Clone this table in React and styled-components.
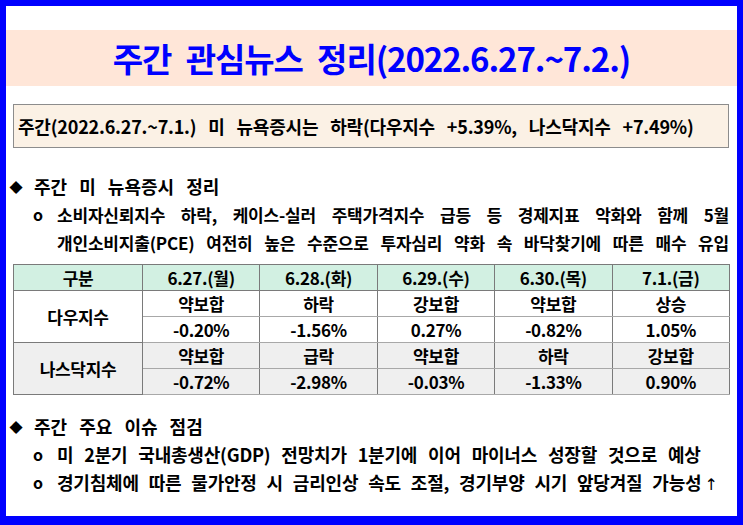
import React from "react";
import styled, { createGlobalStyle } from "styled-components";

const Global = createGlobalStyle`
  html, body { margin: 0; padding: 0; background: #0000ff; }
  body { font-family: "Noto Sans CJK KR", "Noto Sans", sans-serif; }
`;

const Frame = styled.div`
  width: 743px;
  height: 525px;
  box-sizing: border-box;
  background: #0000ff;
  padding: 6px 6px 9px 6px;
`;

const Sheet = styled.div`
  height: 100%;
  background: #ffffff;
  padding-top: 24px;
  box-sizing: border-box;
  color: #000;
`;

const TitleBand = styled.div`
  height: 56px;
  background: #ffe6d8;
  display: flex;
  align-items: center;
  justify-content: center;
`;

const Title = styled.h1`
  margin: 0;
  font-size: 33px;
  font-weight: 700;
  color: #0000ff;
  letter-spacing: -1.1px;
  word-spacing: 8px;
`;

const Summary = styled.div`
  margin: 18px 8px 0 7px;
  height: 44px;
  box-sizing: border-box;
  border: 1px solid #8c8c8c;
  background: #fbf1e5;
  display: flex;
  align-items: center;
  padding-left: 4px;
  font-size: 18px;
  font-weight: 700;
  letter-spacing: -0.2px;
  word-spacing: 8px;
`;

const Heading = styled.div`
  margin: ${(p) => p.$top}px 0 0 0;
  height: 28px;
  display: flex;
  align-items: center;
  font-size: 18px;
  font-weight: 700;
  word-spacing: 8px;
`;

const Diamond = styled.span`
  width: 20px;
  margin-right: 8px;
  font-size: 17px;
  text-align: center;
  font-family: "DejaVu Sans", sans-serif;
`;

const Bullet = styled.div`
  display: flex;
  align-items: center;
  height: 28px;
  margin-left: 22px;
  margin-right: ${(p) => p.$right || 0}px;
  font-size: 17px;
  font-weight: 700;
  letter-spacing: -0.2px;
`;

const Mark = styled.span`
  width: 29px;
  flex: none;
  font-size: 16px;
  font-weight: 700;
  padding-left: 5px;
  box-sizing: border-box;
`;

const Line = styled.span`
  flex: 1;
  font-size: ${(p) => p.$size || 17}px;
  text-align: ${(p) => (p.$justify ? "justify" : "left")};
  text-align-last: ${(p) => (p.$justify ? "justify" : "left")};
  word-spacing: ${(p) => p.$ws || 0}px;
  white-space: ${(p) => (p.$justify ? "normal" : "nowrap")};
`;

const Arrow = styled.span`
  font-family: "DejaVu Sans", sans-serif;
  font-weight: 400;
  font-size: 16px;
  margin-left: 3px;
`;

const Table = styled.table`
  margin: 8px 8px 0 7px;
  width: 717px;
  border-collapse: collapse;
  table-layout: fixed;
  border: 1px solid #7a7a7a;
  font-size: 17px;
  font-weight: 700;
  letter-spacing: -0.3px;
`;

const Th = styled.th`
  height: 23px;
  padding: 0;
  background: #d2f0e2;
  border: 1px solid #7a7a7a;
  font-weight: 700;
  text-align: center;
`;

const Td = styled.td`
  height: 23px;
  padding: 0;
  text-align: center;
  background: ${(p) => (p.$alt ? "#efefef" : "#ffffff")};
  border-left: 1px solid #7a7a7a;
  border-right: 1px solid #7a7a7a;
  border-top: 1px solid ${(p) => (p.$thin ? "#a8a8a8" : "#7a7a7a")};
  border-bottom: 1px solid ${(p) => (p.$thin ? "#a8a8a8" : "#7a7a7a")};
`;

const days = ["6.27.(월)", "6.28.(화)", "6.29.(수)", "6.30.(목)", "7.1.(금)"];
const rows = [
  {
    name: "다우지수",
    status: ["약보합", "하락", "강보합", "약보합", "상승"],
    pct: ["-0.20%", "-1.56%", "0.27%", "-0.82%", "1.05%"],
  },
  {
    name: "나스닥지수",
    status: ["약보합", "급락", "약보합", "하락", "강보합"],
    pct: ["-0.72%", "-2.98%", "-0.03%", "-1.33%", "0.90%"],
  },
];

export default function App() {
  return (
    <Frame>
      <Global />
      <Sheet>
        <TitleBand>
          <Title>주간 관심뉴스 정리(2022.6.27.~7.2.)</Title>
        </TitleBand>
        <Summary>주간(2022.6.27.~7.1.) 미 뉴욕증시는 하락(다우지수 +5.39%, 나스닥지수 +7.49%)</Summary>

        <Heading $top={24}>
          <Diamond>◆</Diamond>주간 미 뉴욕증시 정리
        </Heading>
        <Bullet $right={8}>
          <Mark>o</Mark>
          <Line $justify>소비자신뢰지수 하락, 케이스-실러 주택가격지수 급등 등 경제지표 악화와 함께 5월</Line>
        </Bullet>
        <Bullet $right={8}>
          <Mark />
          <Line $justify>개인소비지출(PCE) 여전히 높은 수준으로 투자심리 약화 속 바닥찾기에 따른 매수 유입</Line>
        </Bullet>

        <Table>
          <colgroup>
            <col style={{ width: 129 }} />
            <col />
            <col />
            <col />
            <col />
            <col />
          </colgroup>
          <thead>
            <tr>
              <Th>구분</Th>
              {days.map((d) => (
                <Th key={d}>{d}</Th>
              ))}
            </tr>
          </thead>
          <tbody>
            {rows.map((r, i) => (
              <React.Fragment key={r.name}>
                <tr>
                  <Td rowSpan={2} $alt={i === 1}>
                    {r.name}
                  </Td>
                  {r.status.map((s, j) => (
                    <Td key={j} $alt={i === 1} $thin>
                      {s}
                    </Td>
                  ))}
                </tr>
                <tr>
                  {r.pct.map((s, j) => (
                    <Td key={j} $alt={i === 1} $thin>
                      {s}
                    </Td>
                  ))}
                </tr>
              </React.Fragment>
            ))}
          </tbody>
        </Table>

        <Heading $top={17}>
          <Diamond>◆</Diamond>주간 주요 이슈 점검
        </Heading>
        <Bullet>
          <Mark>o</Mark>
          <Line $size={18} $ws={7}>미 2분기 국내총생산(GDP) 전망치가 1분기에 이어 마이너스 성장할 것으로 예상</Line>
        </Bullet>
        <Bullet>
          <Mark>o</Mark>
          <Line $size={18} $ws={6}>
            경기침체에 따른 물가안정 시 금리인상 속도 조절, 경기부양 시기 앞당겨질 가능성
            <Arrow>↑</Arrow>
          </Line>
        </Bullet>
      </Sheet>
    </Frame>
  );
}
